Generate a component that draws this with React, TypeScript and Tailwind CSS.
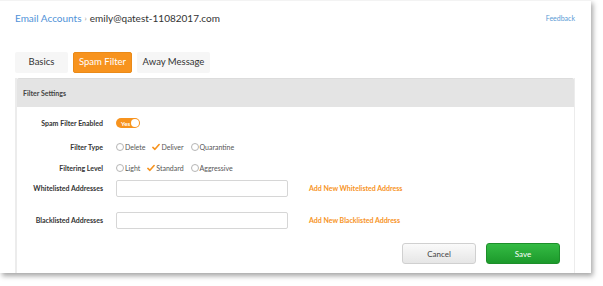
import React from "react";

const Radio = ({ label, checked }: { label: string; checked?: boolean }) => (
  <span className="flex items-center">
    {checked ? (
      <svg width="8" height="8" viewBox="0 0 9 8">
        <path d="M1 4.5 L3.3 6.6 L8 1.2" fill="none" stroke="#f7931e" strokeWidth="1.8" strokeLinecap="round" strokeLinejoin="round" />
      </svg>
    ) : (
      <span className="w-[8px] h-[8px] rounded-full border border-[#b5b5b5] bg-white" />
    )}
    <span className="text-[7px] text-[#555] ml-[1px]">{label}</span>
  </span>
);

const Label = ({ children }: { children: React.ReactNode }) => (
  <div className="w-[86px] text-right text-[7px] font-bold text-[#333] shrink-0">{children}</div>
);

export default function App() {
  return (
    <div className="w-[603px] h-[286px] bg-white font-['Lato',sans-serif]">
      <div className="w-[591px] h-[273px] bg-white shadow-[2px_3px_5px_rgba(0,0,0,0.35)] border-t border-[#f3f3f3] flex flex-col">
        <div className="flex items-center justify-between px-[15px] pt-[7px] h-[27px]">
          <div className="flex items-center text-[10px]">
            <span className="text-[#4f92d8]">Email Accounts</span>
            <span className="text-[#999] text-[8px] mx-[3px]">›</span>
            <span className="text-[#333]">emily@qatest-11082017.com</span>
          </div>
          <span className="text-[7px] text-[#5b9bd5] pr-[1px]">Feedback</span>
        </div>

        <div className="flex gap-[5px] ml-[15px] mt-[24px] h-[21px]">
          <div className="w-[53px] bg-[#f6f6f6] rounded-[2px] flex items-center justify-center text-[9.5px] text-[#333]">Basics</div>
          <div className="w-[59px] bg-[#f7931e] border border-[#ea8a18] rounded-[2px] flex items-center justify-center text-[9.5px] text-white">Spam Filter</div>
          <div className="w-[73px] bg-[#f6f6f6] rounded-[2px] flex items-center justify-center text-[9.5px] text-[#333]">Away Message</div>
        </div>

        <div className="mt-[5px] ml-[15px] w-[560px] flex-1 border-l-2 border-r border-[#ececec] flex flex-col">
          <div className="h-[29px] bg-[#e4e4e4] border-t border-[#dcdcdc] rounded-t-[2px] flex items-center pl-[6px] text-[7px] font-bold text-[#444]">
            Filter Settings
          </div>

          <div className="flex flex-col pt-[11px]">
            <div className="flex items-center h-[10px] gap-[13px]">
              <Label>Spam Filter Enabled</Label>
              <div className="w-[24px] h-[10px] rounded-full bg-[#f7931e] flex items-center justify-between pl-[5px] pr-[1px]">
                <span className="text-[6px] font-bold text-white">Yes</span>
                <span className="w-[8px] h-[8px] rounded-full bg-white" />
              </div>
            </div>

            <div className="flex items-center h-[10px] gap-[13px] mt-[14px]">
              <Label>Filter Type</Label>
              <div className="flex items-center gap-[7px]">
                <Radio label="Delete" />
                <Radio label="Deliver" checked />
                <Radio label="Quarantine" />
              </div>
            </div>

            <div className="flex items-center h-[10px] gap-[13px] mt-[11px]">
              <Label>Filtering Level</Label>
              <div className="flex items-center gap-[7px]">
                <Radio label="Light" />
                <Radio label="Standard" checked />
                <Radio label="Aggressive" />
              </div>
            </div>

            <div className="flex items-center h-[17px] gap-[13px] mt-[7px]">
              <Label>Whitelisted Addresses</Label>
              <div className="w-[172px] h-[17px] border border-[#d6d6d6] rounded-[2px] bg-white" />
              <span className="ml-[8px] text-[7px] font-bold text-[#f7931e]">Add New Whitelisted Address</span>
            </div>

            <div className="flex items-center h-[17px] gap-[13px] mt-[15px]">
              <Label>Blacklisted Addresses</Label>
              <div className="w-[172px] h-[17px] border border-[#d6d6d6] rounded-[2px] bg-white" />
              <span className="ml-[8px] text-[7px] font-bold text-[#f7931e]">Add New Blacklisted Address</span>
            </div>

            <div className="flex justify-end gap-[10px] mt-[14px] pr-[14px]">
              <button className="w-[74px] h-[21px] rounded-[3px] border border-[#d0d0d0] bg-gradient-to-b from-[#fafafa] to-[#e6e6e6] text-[8px] text-[#444]">Cancel</button>
              <button className="w-[74px] h-[21px] rounded-[3px] border border-[#1d8f2a] bg-gradient-to-b from-[#34bb44] to-[#1c9a2b] text-[8px] text-white">Save</button>
            </div>
          </div>
        </div>
      </div>
    </div>
  );
}
